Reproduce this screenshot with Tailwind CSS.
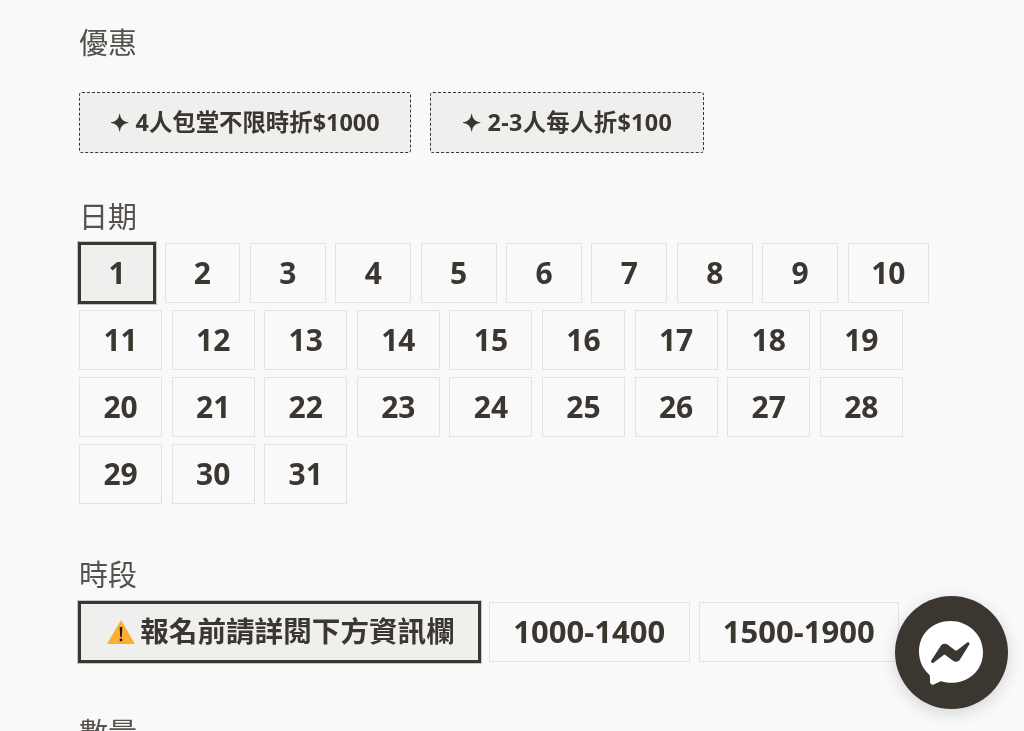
<!doctype html>
<html>
<head>
  <meta charset="UTF-8">
  <script src="https://cdn.jsdelivr.net/npm/@tailwindcss/browser@4"></script>
</head>
<body class="bg-[#f9f9f9] h-[731px] overflow-hidden relative font-['Noto_Sans','Noto_Sans_CJK_TC',sans-serif] text-[#3b3630]">
  <main class="pl-[79px] pt-[21px] blur-[0.4px]">
    <section class="h-[172px]">
      <h2 class="text-[29px] leading-[44px] text-[#55514c]">優惠</h2>
      <div class="flex gap-[19px] mt-[27px] text-[23.4px] font-bold leading-none">
        <button class="w-[332px] h-[61px] rounded-[3px] border-[1.5px] border-dashed border-[#3b3630] bg-[#efefed]">✦ 4人包堂不限時折$1000</button>
        <button class="w-[274px] h-[61px] rounded-[3px] border-[1.5px] border-dashed border-[#3b3630] bg-[#efefed] tracking-[0.3px]">✦ 2-3人每人折$100</button>
      </div>
    </section>

    <section class="mt-[2px]">
      <h2 class="text-[29px] leading-[44px] text-[#55514c]">日期</h2>
      <div class="flex flex-wrap w-[880px] gap-x-[9.5px] gap-y-[7px] mt-[4px] text-[30px] leading-none font-bold">
        <button class="w-[76px] h-[60px] pb-[1px] border-2 border-[#3b3630] outline outline-1 outline-[#3b3630] shadow-[0_0_0_2px_#c8c6c3] bg-[#efefed]">1</button>
        <button class="w-[75.9px] h-[60px] pb-[1px] border-[1.5px] border-[#e3e3e3]">2</button>
        <button class="w-[75.9px] h-[60px] pb-[1px] border-[1.5px] border-[#e3e3e3]">3</button>
        <button class="w-[75.9px] h-[60px] pb-[1px] border-[1.5px] border-[#e3e3e3]">4</button>
        <button class="w-[75.9px] h-[60px] pb-[1px] border-[1.5px] border-[#e3e3e3]">5</button>
        <button class="w-[75.9px] h-[60px] pb-[1px] border-[1.5px] border-[#e3e3e3]">6</button>
        <button class="w-[75.9px] h-[60px] pb-[1px] border-[1.5px] border-[#e3e3e3]">7</button>
        <button class="w-[75.9px] h-[60px] pb-[1px] border-[1.5px] border-[#e3e3e3]">8</button>
        <button class="w-[75.9px] h-[60px] pb-[1px] border-[1.5px] border-[#e3e3e3]">9</button>
        <button class="w-[81.5px] h-[60px] pb-[1px] border-[1.5px] border-[#e3e3e3]">10</button>
        <button class="w-[83.1px] h-[60px] pb-[1px] border-[1.5px] border-[#e3e3e3]">11</button>
        <button class="w-[83.1px] h-[60px] pb-[1px] border-[1.5px] border-[#e3e3e3]">12</button>
        <button class="w-[83.1px] h-[60px] pb-[1px] border-[1.5px] border-[#e3e3e3]">13</button>
        <button class="w-[83.1px] h-[60px] pb-[1px] border-[1.5px] border-[#e3e3e3]">14</button>
        <button class="w-[83.1px] h-[60px] pb-[1px] border-[1.5px] border-[#e3e3e3]">15</button>
        <button class="w-[83.1px] h-[60px] pb-[1px] border-[1.5px] border-[#e3e3e3]">16</button>
        <button class="w-[83.1px] h-[60px] pb-[1px] border-[1.5px] border-[#e3e3e3]">17</button>
        <button class="w-[83.1px] h-[60px] pb-[1px] border-[1.5px] border-[#e3e3e3]">18</button>
        <button class="w-[83.1px] h-[60px] pb-[1px] border-[1.5px] border-[#e3e3e3]">19</button>
        <button class="w-[83.1px] h-[60px] pb-[1px] border-[1.5px] border-[#e3e3e3]">20</button>
        <button class="w-[83.1px] h-[60px] pb-[1px] border-[1.5px] border-[#e3e3e3]">21</button>
        <button class="w-[83.1px] h-[60px] pb-[1px] border-[1.5px] border-[#e3e3e3]">22</button>
        <button class="w-[83.1px] h-[60px] pb-[1px] border-[1.5px] border-[#e3e3e3]">23</button>
        <button class="w-[83.1px] h-[60px] pb-[1px] border-[1.5px] border-[#e3e3e3]">24</button>
        <button class="w-[83.1px] h-[60px] pb-[1px] border-[1.5px] border-[#e3e3e3]">25</button>
        <button class="w-[83.1px] h-[60px] pb-[1px] border-[1.5px] border-[#e3e3e3]">26</button>
        <button class="w-[83.1px] h-[60px] pb-[1px] border-[1.5px] border-[#e3e3e3]">27</button>
        <button class="w-[83.1px] h-[60px] pb-[1px] border-[1.5px] border-[#e3e3e3]">28</button>
        <button class="w-[83.1px] h-[60px] pb-[1px] border-[1.5px] border-[#e3e3e3]">29</button>
        <button class="w-[83.1px] h-[60px] pb-[1px] border-[1.5px] border-[#e3e3e3]">30</button>
        <button class="w-[83.1px] h-[60px] pb-[1px] border-[1.5px] border-[#e3e3e3]">31</button>
      </div>
    </section>

    <section class="mt-[49px]">
      <h2 class="text-[29px] leading-[44px] text-[#55514c]">時段</h2>
      <div class="flex gap-[9px] mt-[5px] text-[31px] leading-none font-bold">
        <button class="w-[401px] h-[60px] pb-[1px] pl-[3px] border-2 border-[#3b3630] outline outline-1 outline-[#3b3630] shadow-[0_0_0_2px_#c8c6c3] bg-[#efefed] flex items-center justify-center text-[28.6px]">
          <svg class="w-[28px] h-[24px] mr-[5px]" viewBox="0 0 28 24"><path d="M14 0 L28 24 H0 Z" fill="#ffac33"/><path d="M12.7 7h2.6l-.5 10h-1.600z" fill="#1f1a14"/><circle cx="14" cy="20" r="1.400" fill="#1f1a14"/></svg>
          報名前請詳閱下方資訊欄
        </button>
        <button class="w-[200.500px] h-[60px] pb-[2px] border-[1.5px] border-[#e3e3e3]">1000-1400</button>
        <button class="w-[200.500px] h-[60px] pb-[2px] border-[1.5px] border-[#e3e3e3]">1500-1900</button>
      </div>
    </section>

    <section class="mt-[49px]">
      <h2 class="text-[29px] leading-[44px] text-[#55514c]">數量</h2>
    </section>
  </main>

  <button class="absolute left-[895px] top-[596px] w-[113px] h-[113px] rounded-full bg-[#3b3630] shadow-[0_4px_16px_rgba(0,0,0,0.15)] flex items-center justify-center">
    <svg class="w-[65px] h-[65px] mr-[2px]" viewBox="0 0 66 66">
      <path fill="#fff" d="M33 1C15 1 1 14 1 32c0 9.500 3.900 17.600 10.200 23.300.5.500.9 1.200.9 2l.2 5.800c.1 1.900 2 3.100 3.700 2.300l6.500-2.900c.6-.2 1.200-.3 1.800-.1 2.900.8 6.300 1.300 9.700 1.300 18 0 32-13 32-31S51 1 33 1z"/>
      <path fill="#3b3630" d="M13.500 41.200 23 26.300c1.500-2.400 4.700-3 7-1.300l7.500 5.600c.7.500 1.600.5 2.300 0l10.100-7.700c1.300-1 3.100.6 2.200 2L42.600 40c-1.500 2.400-4.700 3-7 1.300l-7.500-5.600c-.7-.5-1.600-.5-2.300 0l-10.100 7.700c-1.300 1-3.100-.6-2.200-2.200z"/>
    </svg>
  </button>
</body>
</html>
